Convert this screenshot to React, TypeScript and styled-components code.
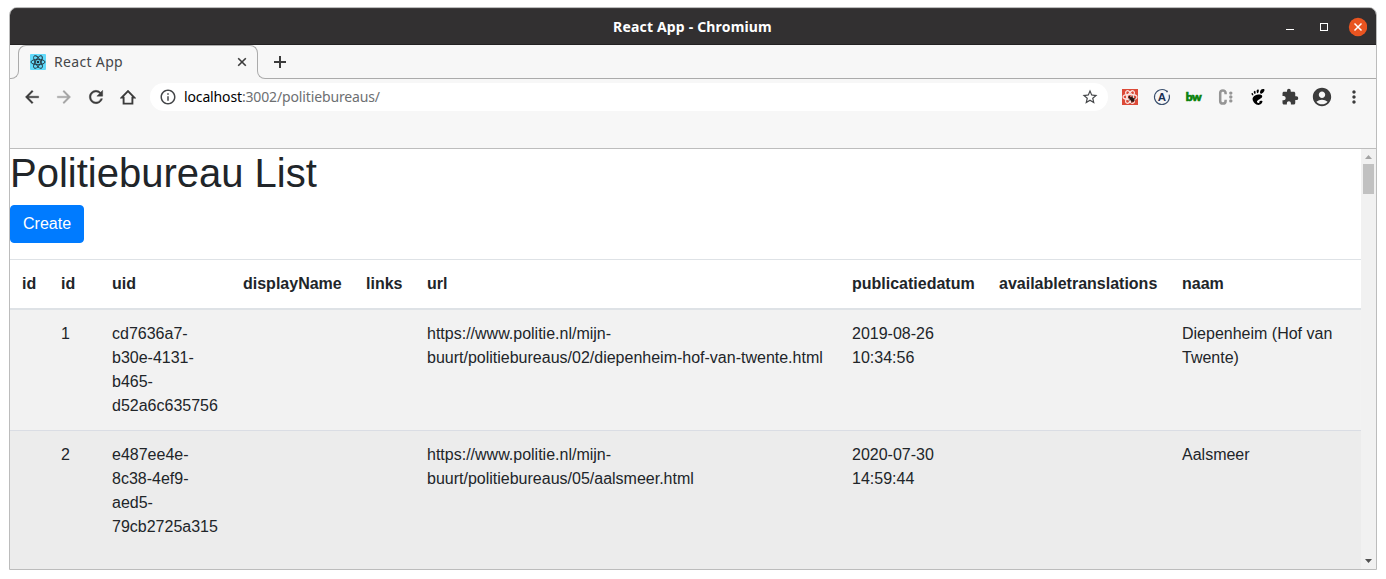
import React from "react";
import styled, { createGlobalStyle } from "styled-components";
import {
  MdAccountCircle,
  MdArrowBack,
  MdArrowForward,
  MdExtension,
  MdInfoOutline,
  MdMoreVert,
  MdRefresh,
  MdStarBorder,
} from "react-icons/md";
import { SiGnome } from "react-icons/si";

const Global = createGlobalStyle`
  * { box-sizing: border-box; }
  body { margin: 0; background: #fff; overflow: hidden; }
`;

const uiFont = `"Noto Sans", "Open Sans", sans-serif`;

const Desktop = styled.div`
  width: 1386px;
  height: 579px;
  padding: 7px 9px 9px;
  background: #fff;
`;

const Window = styled.div`
  display: flex;
  flex-direction: column;
  width: 1368px;
  height: 563px;
  border: 1px solid #bcbcbc;
  border-radius: 8px 8px 0 0;
  overflow: hidden;
  background: #f7f7f7;
`;

const TitleBar = styled.header`
  display: grid;
  grid-template-columns: 1fr auto 1fr;
  align-items: center;
  flex: none;
  height: 37px;
  padding-right: 9px;
  background: #323031;
  border-top: 1px solid #3f3d3e;
  border-bottom: 1px solid #232122;
`;

const WindowTitle = styled.div`
  grid-column: 2;
  padding-left: 8px;
  font: 700 14px/20px ${uiFont};
  letter-spacing: 0.17px;
  color: #fff;
`;

const WindowButtons = styled.div`
  display: flex;
  justify-content: flex-end;
  align-items: center;
`;

const WindowGlyph = styled.svg`
  display: block;
`;

const TabStrip = styled.div`
  display: flex;
  flex: none;
  height: 34px;
  align-items: flex-end;
`;

const Flare = styled.div<{ $side: "left" | "right" }>`
  flex: none;
  width: 9px;
  height: 9px;
  border-bottom: 1px solid #ababab;
  ${(p) =>
    p.$side === "left"
      ? "border-right: 1px solid #ababab; border-bottom-right-radius: 8px;"
      : "border-left: 1px solid #ababab; border-bottom-left-radius: 8px;"}
`;

const Tab = styled.div`
  position: relative;
  display: flex;
  align-items: center;
  width: 238px;
  height: 34px;
  padding: 0 10px 0 11px;
  font: 400 14px/20px ${uiFont};
  color: #45474a;

  &::before {
    content: "";
    position: absolute;
    inset: 0 -1px 9px -1px;
    border: 1px solid #ababab;
    border-bottom: 0;
    border-radius: 8px 8px 0 0;
  }
`;

const TabLabel = styled.span`
  flex: 1;
  margin-left: 8px;
  letter-spacing: 0.33px;
`;

const StripRest = styled.div`
  display: flex;
  align-items: center;
  flex: 1;
  height: 34px;
  padding-left: 8px;
  border-bottom: 1px solid #ababab;
`;

const Toolbar = styled.div`
  display: flex;
  align-items: center;
  flex: none;
  height: 36px;
  margin-bottom: 33px;
  padding-left: 6px;
`;

const IconSlot = styled.div<{ $color?: string; $weight?: number }>`
  display: flex;
  align-items: center;
  justify-content: center;
  flex: none;
  width: 32px;
  height: 28px;
  color: ${(p) => p.$color ?? "#3c3c3c"};

  & > svg {
    stroke-width: ${(p) => p.$weight ?? 0};
  }

  & > svg > path[d^="M0 0h24"] {
    stroke: none;
  }
`;

const AddressBar = styled.div`
  display: flex;
  align-items: center;
  width: 958px;
  height: 28px;
  margin-left: 6px;
  margin-right: 6px;
  padding: 0 9px;
  border-radius: 14px;
  background: #fff;
  color: #45474a;
`;

const Address = styled.span`
  flex: 1;
  margin-left: 7px;
  font: 400 14px/20px ${uiFont};
  letter-spacing: -0.14px;
  color: #6d6f72;
`;

const Host = styled.span`
  color: #000;
`;

const BwLogo = styled.span`
  margin: 0 1px 1px 0;
  font: 900 12px/16px Lato, sans-serif;
  letter-spacing: -0.6px;
  color: #0a820a;
  -webkit-text-stroke: 0.7px #0a820a;
`;

const Viewport = styled.div`
  display: flex;
  flex: 1;
  min-height: 0;
  border-top: 1px solid #bdbdbd;
  background: #fff;
`;

const Page = styled.main`
  flex: none;
  width: 1351px;
  overflow: hidden;
  font: 400 16px/24px "Liberation Sans", Arial, sans-serif;
  color: #212529;
`;

const Heading = styled.h1`
  margin: 0 0 8px;
  font-size: 40px;
  font-weight: 500;
  line-height: 48px;
`;

const CreateButton = styled.button`
  display: block;
  height: 38px;
  padding: 6px 12px;
  border: 1px solid #007bff;
  border-radius: 4px;
  background: #007bff;
  color: #fff;
  font: inherit;
`;

const Table = styled.div`
  margin-top: 16px;
`;

const Row = styled.div<{ $kind: "head" | "striped" | "hover" }>`
  display: grid;
  grid-template-columns: 39px 51px 131px 123px 61px 425px 147px 183px 191px;
  ${(p) =>
    p.$kind === "head" &&
    "border-top: 1px solid #dee2e6; border-bottom: 2px solid #dee2e6; font-weight: 700;"}
  ${(p) => p.$kind === "striped" && "background: #f2f2f2;"}
  ${(p) =>
    p.$kind === "hover" &&
    "background: #ececec; border-top: 1px solid #dadde4; min-height: 160px;"}
`;

const Cell = styled.div`
  padding: 12px;
  white-space: pre;
`;

const Scrollbar = styled.div`
  display: flex;
  flex-direction: column;
  flex: 1;
  align-items: center;
  background: #f1f1f1;
`;

const ScrollThumb = styled.div`
  width: 11px;
  height: 30px;
  margin-bottom: auto;
  background: #c1c1c1;
`;

const columns = ["id", "id", "uid", "displayName", "links", "url", "publicatiedatum", "availabletranslations", "naam"];

const rows = [
  [
    "", "1", "cd7636a7-\nb30e-4131-\nb465-\nd52a6c635756", "", "",
    "https://www.politie.nl/mijn-\nbuurt/politiebureaus/02/diepenheim-hof-van-twente.html",
    "2019-08-26\n10:34:56", "", "Diepenheim (Hof van\nTwente)",
  ],
  [
    "", "2", "e487ee4e-\n8c38-4ef9-\naed5-\n79cb2725a315", "", "",
    "https://www.politie.nl/mijn-\nbuurt/politiebureaus/05/aalsmeer.html",
    "2020-07-30\n14:59:44", "", "Aalsmeer",
  ],
];

const Orbits = ({ color, width }: { color: string; width: number }) => (
  <g fill="none" stroke={color} strokeWidth={width}>
    {[0, 60, 120].map((angle) => (
      <ellipse key={angle} cx="8" cy="8" rx="7" ry="2.7" transform={`rotate(${angle} 8 8)`} />
    ))}
    <circle cx="8" cy="8" r="1.3" fill={color} stroke="none" />
  </g>
);

const ReactFavicon = () => (
  <svg width="16" height="16" viewBox="0 0 16 16">
    <rect width="16" height="16" rx="1" fill="#61dafb" />
    <Orbits color="#20303a" width={0.9} />
  </svg>
);

const ReactDevtools = () => (
  <svg width="16" height="16" viewBox="0 0 16 16">
    <rect width="16" height="16" fill="#dc4a38" />
    <Orbits color="#fbe4e0" width={1.2} />
    <g transform="translate(9.4 9.7) rotate(-50)" fill="#2a1612" stroke="#2a1612">
      <ellipse cx="0" cy="1" rx="1.9" ry="2.8" stroke="none" />
      <circle cx="0" cy="-2.4" r="1.3" stroke="none" />
      <path d="M-3 -1.2l6 4M3 -1.2l-6 4" strokeWidth="0.7" />
    </g>
  </svg>
);

const ApolloLogo = () => (
  <svg width="18" height="18" viewBox="0 0 18 18">
    <path
      d="M13.2 2.8A7.5 7.5 0 1 0 16.2 7"
      fill="none"
      stroke="#3b506e"
      strokeWidth="1.1"
      strokeLinecap="round"
    />
    <circle cx="14" cy="3.4" r="0.9" fill="#2b4263" />
    <text x="9" y="13" textAnchor="middle" fontFamily="Liberation Sans" fontWeight="700" fontSize="11.5" fill="#1b3054">
      A
    </text>
  </svg>
);

const ColonLogo = () => (
  <svg width="16" height="16" viewBox="0 0 16 16">
    <path
      d="M7.6 5.2V4.1A2.7 2.7 0 0 0 2.2 4.1v7.8a2.7 2.7 0 0 0 5.4 0v-1.1"
      fill="none"
      stroke="#959595"
      strokeWidth="2.5"
    />
    <g fill="#959595">
      <circle cx="12.8" cy="4.1" r="1.7" />
      <circle cx="12.8" cy="8" r="1.7" />
      <circle cx="12.8" cy="11.9" r="1.7" />
    </g>
  </svg>
);

export default function App() {
  return (
    <Desktop>
      <Global />
      <Window>
        <TitleBar>
          <WindowTitle>React App - Chromium</WindowTitle>
          <WindowButtons>
            <WindowGlyph width="82" height="20" viewBox="0 0 82 20">
              <path d="M1 12.5h8" stroke="#fff" />
              <rect x="35.5" y="6.5" width="7" height="7" fill="none" stroke="#fff" />
              <circle cx="73" cy="10" r="9.2" fill="#e95420" />
              <path d="M69.5 6.5l7 7M76.5 6.5l-7 7" stroke="#fff" strokeWidth="1.5" />
            </WindowGlyph>
          </WindowButtons>
        </TitleBar>
        <TabStrip>
          <Flare $side="left" />
          <Tab>
            <ReactFavicon />
            <TabLabel>React App</TabLabel>
            <svg width="10" height="10" viewBox="0 0 10 10">
              <path d="M1.2 1.2l7.6 7.6M8.8 1.2L1.2 8.8" stroke="#3c3c3c" strokeWidth="1.6" />
            </svg>
          </Tab>
          <Flare $side="right" />
          <StripRest>
            <svg width="12" height="12" viewBox="0 0 12 12">
              <path d="M6 0v12M0 6h12" stroke="#3c3c3c" strokeWidth="2" />
            </svg>
          </StripRest>
        </TabStrip>
        <Toolbar>
          <IconSlot $weight={0.4}><MdArrowBack size={20} /></IconSlot>
          <IconSlot $color="#a5a5a5" $weight={0.4}><MdArrowForward size={20} /></IconSlot>
          <IconSlot $weight={0.5}><MdRefresh size={20} /></IconSlot>
          <IconSlot>
            <svg width="16" height="16" viewBox="0 0 16 16">
              <path d="M1.6 8.6L8 2l6.4 6.6H12.4v6H3.6v-6z" fill="none" stroke="#3c3c3c" strokeWidth="1.9" />
            </svg>
          </IconSlot>
          <AddressBar>
            <MdInfoOutline size={18} strokeWidth={0} />
            <Address><Host>localhost</Host>:3002/politiebureaus/</Address>
            <MdStarBorder size={18} strokeWidth={0} />
          </AddressBar>
          <IconSlot><ReactDevtools /></IconSlot>
          <IconSlot><ApolloLogo /></IconSlot>
          <IconSlot><BwLogo>bw</BwLogo></IconSlot>
          <IconSlot><ColonLogo /></IconSlot>
          <IconSlot $color="#000"><SiGnome size={16} /></IconSlot>
          <IconSlot><MdExtension size={18} /></IconSlot>
          <IconSlot><MdAccountCircle size={22} /></IconSlot>
          <IconSlot><MdMoreVert size={20} /></IconSlot>
        </Toolbar>
        <Viewport>
          <Page>
            <Heading>Politiebureau List</Heading>
            <CreateButton>Create</CreateButton>
            <Table>
              <Row $kind="head">
                {columns.map((name, i) => <Cell key={i}>{name}</Cell>)}
              </Row>
              {rows.map((row, r) => (
                <Row key={r} $kind={r === 0 ? "striped" : "hover"}>
                  {row.map((value, i) => <Cell key={i}>{value}</Cell>)}
                </Row>
              ))}
            </Table>
          </Page>
          <Scrollbar>
            <svg width="15" height="15" viewBox="0 0 15 15">
              <path d="M4 10h7L7.5 6z" fill="#a3a3a3" />
            </svg>
            <ScrollThumb />
            <svg width="15" height="15" viewBox="0 0 15 15">
              <path d="M4 5h7L7.5 9z" fill="#505050" />
            </svg>
          </Scrollbar>
        </Viewport>
      </Window>
    </Desktop>
  );
}
